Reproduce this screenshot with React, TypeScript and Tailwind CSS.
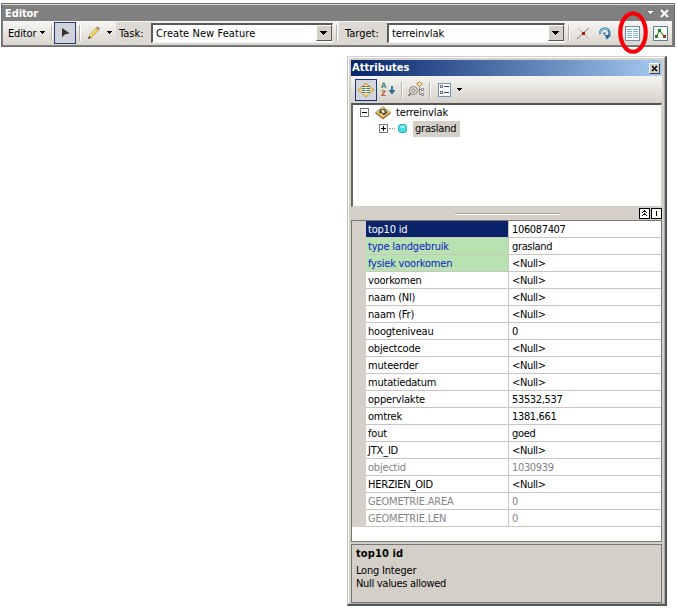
import React from "react";

type Row = { name: string; value: string; kind?: "selected" | "green" | "muted" };

const rows: Row[] = [
  { name: "top10 id", value: "106087407", kind: "selected" },
  { name: "type landgebruik", value: "grasland", kind: "green" },
  { name: "fysiek voorkomen", value: "<Null>", kind: "green" },
  { name: "voorkomen", value: "<Null>" },
  { name: "naam (Nl)", value: "<Null>" },
  { name: "naam (Fr)", value: "<Null>" },
  { name: "hoogteniveau", value: "0" },
  { name: "objectcode", value: "<Null>" },
  { name: "muteerder", value: "<Null>" },
  { name: "mutatiedatum", value: "<Null>" },
  { name: "oppervlakte", value: "53532,537" },
  { name: "omtrek", value: "1381,661" },
  { name: "fout", value: "goed" },
  { name: "JTX_ID", value: "<Null>" },
  { name: "objectid", value: "1030939", kind: "muted" },
  { name: "HERZIEN_OID", value: "<Null>" },
  { name: "GEOMETRIE.AREA", value: "0", kind: "muted" },
  { name: "GEOMETRIE.LEN", value: "0", kind: "muted" },
];

const nameStyles = {
  selected: "bg-[#0a246a] text-white",
  green: "bg-[#b8e3b1] text-[#0b20c8]",
  muted: "text-[#858585]",
  plain: "text-black",
};

function Caret({ className = "" }: { className?: string }) {
  return (
    <svg className={`shrink-0 ${className}`} width="7" height="4" viewBox="0 0 7 4" shapeRendering="crispEdges">
      <path d="M1 0h5v1h-1v1h-1v1h-1v-1h-1v-1h-1z" fill="currentColor" />
    </svg>
  );
}

function Combo({ text, className }: { text: string; className: string }) {
  return (
    <div className={`flex h-[20px] shrink-0 border-t-2 border-l-2 border-r border-b border-t-[#5a5a5a] border-l-[#5a5a5a] border-r-[#e6e3dc] border-b-[#f4f2ee] bg-white ${className}`}>
      <span className="flex-1 pl-[3px] leading-[18px]">{text}</span>
      <span className="flex h-[16px] w-[16px] items-center justify-center border border-t-white border-l-white border-r-[#555] border-b-[#555] bg-[#d4d0c8]">
        <svg width="8" height="4" viewBox="0 0 8 4" shapeRendering="crispEdges">
          <path d="M0 0h7v1h-1v1h-1v1h-1v1h-1v-1h-1v-1h-1v-1h-1z" />
        </svg>
      </span>
    </div>
  );
}

function Divider({ className = "" }: { className?: string }) {
  return <span className={`h-[16px] w-[2px] shrink-0 border-r border-l border-r-white border-l-[#b5b1a8] ${className}`} />;
}

function EditorBar() {
  return (
    <div className="relative mt-[3px] ml-px h-[44px] w-[674px] border border-[#6d6d6d] bg-[#808080]">
      <div className="flex h-[17px] items-center border-t border-[#dedbd4] pr-[5px] pl-[3px] text-white">
        <span className="flex-1 pt-px font-bold leading-[16px] tracking-[-0.1px]">Editor</span>
        <Caret className="mr-[6px]" />
        <svg width="9" height="9" viewBox="0 0 9 9">
          <path d="M1 1l7 7M8 1l-7 7" stroke="#fff" strokeWidth="2" />
        </svg>
      </div>
      <div className="ml-px flex h-[24px] w-[669px] items-center bg-linear-to-b from-[#f7f6f3] to-[#d8d5ce]">
        <span className="ml-[5px] w-[31px] shrink-0 tracking-[-0.15px]">Editor</span>
        <Caret />
        <Divider className="ml-[5px]" />
        <span className="ml-px flex h-[22px] w-[22px] shrink-0 items-center justify-center border border-[#25386f] bg-[#d0d3dc]">
          <svg width="9" height="10" viewBox="0 0 9 10">
            <path d="M1 0v9.500l2.600-3L8.600 5.200z" fill="#333" />
          </svg>
        </span>
        <Divider className="ml-[3px]" />
        <svg className="ml-[6px] shrink-0" width="14" height="14" viewBox="0 0 14 14">
          <path d="M2 10l7-8 3 2-8 8z" fill="#edc14a" stroke="#b98d3c" strokeWidth=".6" />
          <path d="M3.200 10L10 2.500" stroke="#fff0a5" />
          <path d="M9 2l1.500-1.500 2.500 2L12 4z" fill="#9c8494" />
          <path d="M1 13l1-3 2 2z" fill="#333" />
        </svg>
        <Caret className="ml-[5px]" />
        <div className="ml-[3px] flex h-[22px] w-[39px] shrink-0 items-center bg-[#dcd9d2] pl-[3px] tracking-[0px]">Task:</div>
        <Combo text="Create New Feature" className="ml-[-4px] w-[182px] tracking-[0.07px]" />
        <Divider className="ml-[3px]" />
        <div className="ml-px flex h-[22px] w-[48px] shrink-0 items-center bg-[#dcd9d2] pl-[6px] tracking-[0px]">Target:</div>
        <Combo text="terreinvlak" className="w-[178px] tracking-[-0.1px]" />
        <Divider className="ml-[3px]" />
        <svg className="ml-[6px] shrink-0" width="15" height="15" viewBox="0 0 15 15">
          <path d="M1 13L13 2" stroke="#847966" strokeWidth="1" />
          <path d="M3 3l9.500 9.500" stroke="#e2806d" strokeWidth="1" strokeDasharray="2 1" />
          <path d="M6 6h3v3H6z" fill="#a61717" />
        </svg>
        <svg className="ml-[7px] shrink-0" width="14" height="14" viewBox="0 0 14 14">
          <path d="M2 8a4.800 4.800 0 1 1 9 1.500" fill="none" stroke="#4c88b4" strokeWidth="2.400" />
          <path d="M2 7a4.800 4.800 0 0 1 8-3" fill="none" stroke="#9bd0ee" strokeWidth="1" />
          <path d="M6.500 9H13l-4 4.500z" fill="#286798" />
          <circle cx="6.5" cy="7.5" r="1.3" fill="#4b80a0" />
        </svg>
        <svg className="ml-[13px] shrink-0" width="15" height="15" viewBox="0 0 15 15" shapeRendering="crispEdges">
          <path d="M.5.5h14v14H.5z" fill="#fff" stroke="#6c8fa5" />
          <path d="M2 3.500h5M8 3.500h5M2 5.500h5M8 5.500h5M2 7.500h5M8 7.500h5M2 9.500h5M8 9.500h5M2 11.500h5M8 11.500h5" stroke="#7cb9d3" />
        </svg>
        <svg className="ml-[13px] shrink-0" width="15" height="15" viewBox="0 0 15 15">
          <path d="M.5.5h14v14H.5z" fill="#fff" stroke="#548291" />
          <path d="M3.500 10.500L6.500 4.500l5 6" fill="none" stroke="#54a84c" strokeWidth="1.300" />
          <path d="M2 9h3v3H2zM5 3h3v3H5z" fill="#247c25" />
          <path d="M10 9h3v3h-3z" fill="#993325" />
        </svg>
      </div>
      <svg className="absolute top-[6px] left-[614px]" width="34" height="46" viewBox="0 0 34 46">
        <ellipse cx="17" cy="22.5" rx="12.700" ry="19.200" fill="none" stroke="#f50008" strokeWidth="4.200" />
      </svg>
    </div>
  );
}

function AttributeToolbar() {
  return (
    <div className="flex h-[27px] items-center bg-linear-to-b from-[#f5f4f0] to-[#d5d1c9]">
      <span className="ml-[4px] flex h-[22px] w-[22px] items-center justify-center border border-[#17357c] bg-[#d3d5dc]">
        <svg width="18" height="16" viewBox="0 0 18 16">
          <path d="M1 8Q5 5 9 1q4 4 8 7-4 3-8 7-4-4-8-7z" fill="#f4cf70" stroke="#c19b4c" />
          <path d="M5 4.500h8v7H5z" fill="#fff2bb" />
          <path d="M5 4.500h3.500M9.500 4.500H13M5 6.500h3.500M9.500 6.500H13M5 8.500h3.500M9.500 8.500H13M5 10.500h3.500M9.500 10.500H13" stroke="#356d98" />
        </svg>
      </span>
      <span className="ml-[4px] flex w-[7px] flex-col text-[7.5px] font-bold">
        <span className="h-[8px] leading-[8px] text-[#438c62]">A</span>
        <span className="h-[8px] leading-[8px] text-[#bb5a38]">Z</span>
      </span>
      <svg width="8" height="13" viewBox="0 0 8 13">
        <path d="M4 3v6" stroke="#286b98" strokeWidth="1.800" />
        <path d="M.5 7h7L4 11.500z" fill="#286b98" />
      </svg>
      <Divider className="ml-[5px]" />
      <svg className="ml-[5px]" width="18" height="17" viewBox="0 0 18 17">
        <circle cx="5.500" cy="9.500" r="4" fill="#ece9e2" stroke="#7e7b76" />
        <circle cx="5.500" cy="9.500" r="1.700" fill="none" stroke="#76726b" />
        <path d="M2.500 12.500L.5 15" stroke="#76726b" strokeWidth="1.500" />
        <path d="M8.500 3L11.500.8l3 2.200-3 2.200z" fill="#f9e3a6" stroke="#b58a42" />
        <path d="M11.500 5.500v8h2M11.500 8.500h2" fill="none" stroke="#888" />
        <path d="M13.500 7.500h2v2h-2zM13.500 12.500h2v2h-2z" fill="#fff" stroke="#888" />
      </svg>
      <Divider className="ml-[3px]" />
      <svg className="ml-[7px]" width="13" height="14" viewBox="0 0 13 14" shapeRendering="crispEdges">
        <path d="M.5.5h12v13H.5z" fill="#f5f8fc" stroke="#6f95bd" />
        <path d="M2 2h3v3H2zM2 8h3v3H2z" fill="#777" />
        <path d="M3 3h1v1H3zM3 9h1v1H3z" fill="#fff" />
        <path d="M6 3.500h5M6 9.500h5" stroke="#444" />
      </svg>
      <Caret className="ml-[5px]" />
    </div>
  );
}

function Expander({ plus }: { plus?: boolean }) {
  return (
    <svg className="shrink-0" width="9" height="9" viewBox="0 0 9 9" shapeRendering="crispEdges">
      <path d="M.5.5h8v8h-8z" fill="#fff" stroke="#777" />
      <path d={plus ? "M2 4.5h5M4.5 2v5" : "M2 4.5h5"} stroke="#000" />
    </svg>
  );
}

function Tree() {
  return (
    <div className="h-[104px] border-t-2 border-l-2 border-r border-b border-t-[#555] border-l-[#666] border-r-[#d4d0c8] border-b-[#d4d0c8] bg-white">
      <div className="flex h-[15px] items-center pl-[7px]">
        <Expander />
        <svg className="ml-[6px] shrink-0" width="16" height="14" viewBox="0 0 16 14">
          <path d="M.5 6.500v1.200L8 13.500l7.500-5.800V6.500z" fill="#9d793f" />
          <path d="M.7 6.500L8 .7l7.300 5.800L8 12z" fill="#efc96e" stroke="#9b783a" strokeWidth=".8" />
          <path d="M5 3.500l4.500-.5 3 3.300L9 9.500l-2-2-3-.5z" fill="#4e4a40" />
          <path d="M6 4.500l3-.5 1 2.500-2.500.5z" fill="#fff3d0" />
        </svg>
        <span className="ml-[5px] tracking-[-0.1px]">terreinvlak</span>
      </div>
      <div className="flex h-[17px] items-center pl-[26px]">
        <Expander plus />
        <span className="ml-px w-[6px] border-t border-dotted border-[#999]" />
        <svg className="ml-[3px] shrink-0" width="9" height="9" viewBox="0 0 9 9">
          <rect x=".5" y=".5" width="8" height="8" rx="2.5" fill="#45dde2" stroke="#36adb5" />
          <path d="M2.500 3h4" stroke="#d2ffff" strokeWidth="1.500" />
        </svg>
        <span className="ml-[6px] h-[16px] w-[47px] bg-[#d4d0c8] pl-[2px] leading-[16px]">grasland</span>
      </div>
    </div>
  );
}

function SplitBar() {
  return (
    <div className="flex h-[13px] items-center bg-[#d4d0c8]">
      <span className="ml-[104px] h-[2px] w-[105px] border-t border-b border-t-[#aaa69e] border-b-white" />
      <svg className="ml-[79px]" width="23" height="11" viewBox="0 0 23 11" shapeRendering="crispEdges">
        <path d="M.5.5h10v10H.5zM12.5.5h10v10h-10z" fill="#fff" stroke="#000" />
        <path d="M5 2h1v1h1v1h1v1H7V4H4v1H3V4h1V3h1zM5 5h1v1h1v1h1v1H7V7H4v1H3V7h1V6h1z" />
        <path d="M17 3h1v5h-1z" />
      </svg>
    </div>
  );
}

function PropertyGrid() {
  return (
    <div className="h-[322px] border border-[#777] bg-white">
      {rows.map((row) => (
        <div key={row.name} className="flex h-[17px]">
          <div className="w-[14px] bg-[#d4d0c8]" />
          <div className={`w-[143px] border-r border-b border-[#c9c6bf] pl-[2px] leading-[17px] ${nameStyles[row.kind ?? "plain"]}`}>
            {row.name}
          </div>
          <div className={`flex-1 border-b border-[#c9c6bf] pl-[3px] leading-[17px] tracking-[-0.35px] ${row.kind === "muted" ? "text-[#858585]" : "text-black"}`}>
            {row.value}
          </div>
        </div>
      ))}
    </div>
  );
}

function AttributesWindow() {
  return (
    <div className="mt-[9px] ml-[347px] h-[550px] w-[320px] border-t border-l border-r-2 border-b-2 border-t-[#d4d0c8] border-l-[#c5c1b9] border-r-[#555] border-b-[#555] bg-[#d4d0c8]">
      <div className="h-full border-t border-l border-r border-b border-t-white border-l-white border-r-[#aaa] border-b-[#aaa] pt-[2px] pr-[2px] pl-[2px]">
        <div className="flex h-[16px] items-center bg-linear-to-r from-[#0a246a] to-[#a6caf0] pr-[2px] pl-px text-white">
          <span className="flex-1 leading-[16px] font-bold tracking-[0.07px]">Attributes</span>
          <span className="flex h-[11px] w-[11px] items-center justify-center border border-t-white border-l-white border-r-[#404040] border-b-[#404040] bg-[#d4d0c8]">
            <svg width="7" height="7" viewBox="0 0 7 7">
              <path d="M1 1l5 5M6 1L1 6" stroke="#000" strokeWidth="1.5" />
            </svg>
          </span>
        </div>
        <AttributeToolbar />
        <Tree />
        <SplitBar />
        <PropertyGrid />
        <div className="mt-[2px] h-[59px] border border-[#777] pt-[1px] pl-[4px]">
          <div className="font-bold leading-[16px] tracking-[0.1px]">top10 id</div>
          <div className="mt-[2px] leading-[13px]">Long Integer</div>
          <div className="leading-[13px] tracking-[-0.3px]">Null values allowed</div>
        </div>
      </div>
    </div>
  );
}

export default function App() {
  return (
    <div className="flow-root h-[609px] w-[678px] overflow-hidden bg-white font-['DejaVu_Sans_Condensed','DejaVu_Sans',sans-serif] text-[11px] leading-[13px] tracking-[-0.2px] whitespace-nowrap text-black [font-stretch:condensed]">
      <EditorBar />
      <AttributesWindow />
    </div>
  );
}
